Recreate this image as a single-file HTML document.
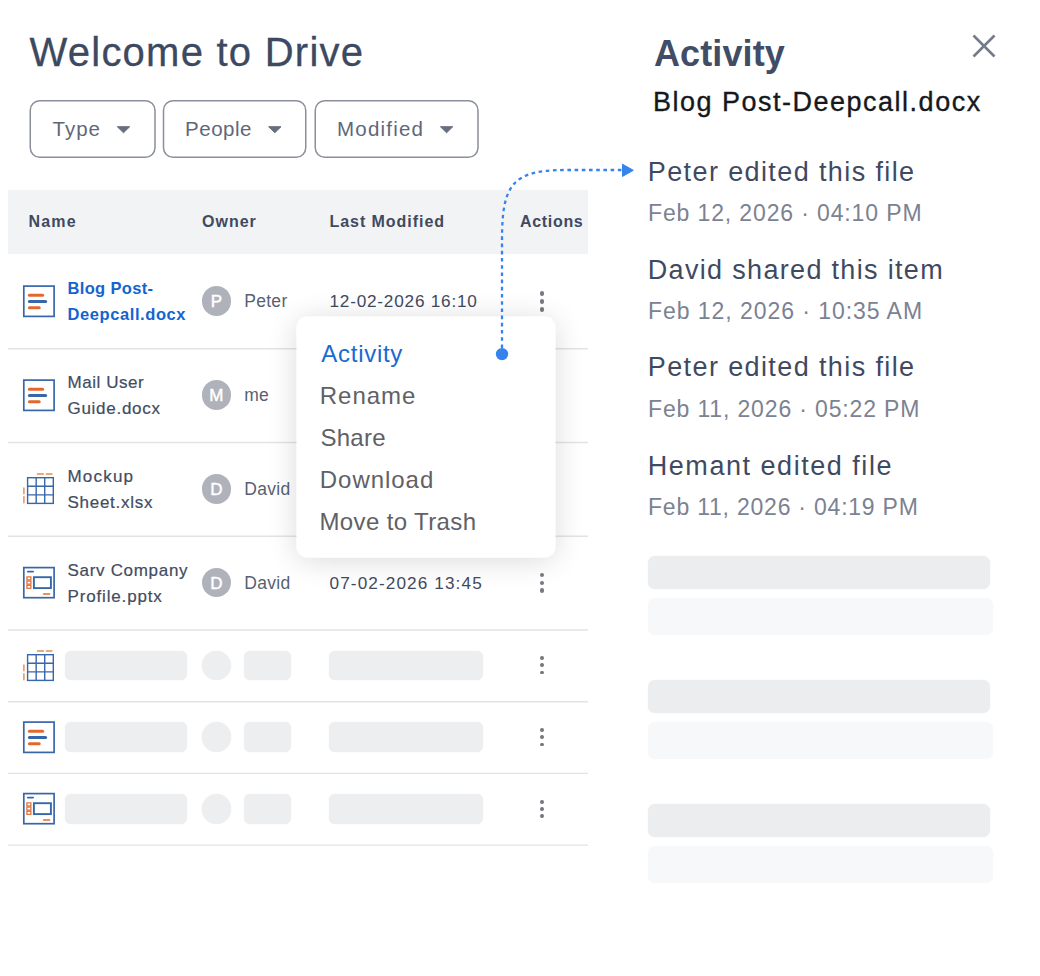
<!DOCTYPE html>
<html lang="en">
<head>
<meta charset="utf-8">
<title>Welcome to Drive</title>
<style>
*{box-sizing:border-box;margin:0;padding:0}
html,body{width:1040px;height:976px;background:#fff;overflow:hidden}
body{position:relative;font-family:"Liberation Sans",sans-serif;color:#3c4861}
.t{position:absolute;white-space:nowrap;line-height:1}
.abs{position:absolute}
h1.t{font-size:40px;font-weight:400;color:#3d4961;left:29.5px;top:31.9px;letter-spacing:1.24px;-webkit-text-stroke:.3px #3d4961}
.bt{font-size:20.5px;color:#60677a;top:118.9px}
.thead{position:absolute;left:8px;top:190px;width:580px;height:64px;background:#f1f3f5}
.th{font-size:16px;font-weight:700;color:#3f4a60;top:213.5px}
.fn{font-size:17px;color:#424c62;line-height:25.9px;left:67.5px;-webkit-text-stroke:.2px #424c62}
.fn.b{color:#1464d0;font-weight:700;font-size:16.5px;-webkit-text-stroke:0}
.av{position:absolute;left:201.5px;width:29.8px;height:29.8px;border-radius:50%;background:#afb2ba;color:#fff;font-size:17px;text-align:center;line-height:32.6px;-webkit-text-stroke:.45px #fff}
.ow{font-size:17.5px;color:#585f72;left:244.2px;letter-spacing:.3px}
.dt{font-size:17.2px;color:#3f4a60;left:329.5px;letter-spacing:.78px}
.dots{position:absolute;left:539.75px;width:5px;height:21px}
.dots b{position:absolute;left:0;width:4.5px;height:4.5px;border-radius:50%;background:#76797f}
.dots.s{left:540.1px}.dots.s b{width:3.8px;height:3.8px;background:#74777c}
.sk{position:absolute;background:#edeef0;border-radius:6px;box-shadow:0 0 1.5px #edeef0}
.mi{font-size:24px;color:#5f6166;left:320.5px}
.at{font-size:27px;color:#3f4a62;left:647.8px;letter-spacing:1.39px}
.ad{font-size:23px;color:#7b8292;left:648px;letter-spacing:.87px}
</style>
</head>
<body>

<h1 class="t">Welcome to Drive</h1>

<svg class="abs" style="left:0;top:90px" width="520" height="80" viewBox="0 90 520 80"><g fill="#fff" stroke="#8b8f9b" stroke-width="1.5"><rect x="30.25" y="100.75" width="124.75" height="56.5" rx="9.5"/><rect x="163.5" y="100.75" width="142.25" height="56.5" rx="9.5"/><rect x="315.25" y="100.75" width="162.75" height="56.5" rx="9.5"/></g><g fill="#686e7e" stroke="#686e7e" stroke-width="1" stroke-linejoin="round"><path d="M117.3 126.7H129.7L123.5 132.8Z"/><path d="M268.6 126.7H281L274.8 132.8Z"/><path d="M440.4 126.7H452.8L446.6 132.8Z"/></g></svg>
<span class="t bt" style="left:52.5px;letter-spacing:1px">Type</span>
<span class="t bt" style="left:185px;letter-spacing:.53px">People</span>
<span class="t bt" style="left:337px;letter-spacing:1.2px">Modified</span>

<div class="thead"></div>
<span class="t th" style="left:28.5px;letter-spacing:1.2px">Name</span>
<span class="t th" style="left:202px;letter-spacing:1px">Owner</span>
<span class="t th" style="left:329.5px;letter-spacing:.95px">Last Modified</span>
<span class="t th" style="left:520px;letter-spacing:.68px">Actions</span>


<svg class="abs" style="left:0;top:340px" width="600" height="520" viewBox="0 340 600 520"><path d="M8 348.7H588M8 442.5H588M8 536.25H588M8 630H588M8 701.7H588M8 773.4H588M8 845.1H588" stroke="#e1e3e6" stroke-width="1.4" fill="none"/></svg>

<!-- row 1 -->
<svg class="abs" style="left:20px;top:282px" width="38" height="38" viewBox="0 0 38 38"><rect x="3.8" y="4.1" width="30.3" height="30.3" fill="#fff" stroke="#3867a9" stroke-width="1.7"/><path d="M9.4 13.2H22.6" stroke="#e2692d" stroke-width="3" stroke-linecap="round"/><path d="M9.4 19.5H25.6" stroke="#3867a9" stroke-width="3" stroke-linecap="round"/><path d="M9.4 25.8H19.2" stroke="#e2692d" stroke-width="3" stroke-linecap="round"/></svg>
<span class="t fn b" style="top:276.1px"><span style="letter-spacing:.33px">Blog Post-</span><br><span style="letter-spacing:.59px">Deepcall.docx</span></span>
<div class="av" style="top:286.4px">P</div>
<span class="t ow" style="top:293.4px">Peter</span>
<span class="t dt" style="top:293.2px">12-02-2026 16:10</span>
<div class="dots" style="top:291.25px"><b style="top:0"></b><b style="top:8px"></b><b style="top:15.75px"></b></div>

<!-- row 2 -->
<svg class="abs" style="left:20px;top:376px" width="38" height="38" viewBox="0 0 38 38"><rect x="3.8" y="4.1" width="30.3" height="30.3" fill="#fff" stroke="#3867a9" stroke-width="1.7"/><path d="M9.4 13.2H22.6" stroke="#e2692d" stroke-width="3" stroke-linecap="round"/><path d="M9.4 19.5H25.6" stroke="#3867a9" stroke-width="3" stroke-linecap="round"/><path d="M9.4 25.8H19.2" stroke="#e2692d" stroke-width="3" stroke-linecap="round"/></svg>
<span class="t fn" style="top:370.4px"><span style="letter-spacing:.56px">Mail User</span><br><span style="letter-spacing:.72px">Guide.docx</span></span>
<div class="av" style="top:380.1px">M</div>
<span class="t ow" style="top:387.1px">me</span>

<!-- row 3 -->
<svg class="abs" style="left:20px;top:470px" width="38" height="38" viewBox="0 0 38 38"><g stroke="#3867a9" stroke-width="1.4" fill="none"><rect x="7.6" y="7.7" width="25.7" height="25.7" fill="#fff"/><path d="M16.17 7.7V33.4M24.73 7.7V33.4M7.6 16.27H33.3M7.6 24.83H33.3"/></g><path d="M17.4 4H23.4M26.4 4H32M3.9 17.9V23.7M3.9 26.8V32.8" stroke="#e78a50" stroke-width="1.4" stroke-linecap="round"/></svg>
<span class="t fn" style="top:464.1px"><span style="letter-spacing:1.19px">Mockup</span><br><span style="letter-spacing:.73px">Sheet.xlsx</span></span>
<div class="av" style="top:473.9px">D</div>
<span class="t ow" style="top:480.9px">David</span>

<!-- row 4 -->
<svg class="abs" style="left:20px;top:564px" width="38" height="38" viewBox="0 0 38 38"><rect x="3.8" y="3.6" width="30.3" height="30.1" fill="#fff" stroke="#3867a9" stroke-width="1.7"/><path d="M7.7 7.6H13.2" stroke="#3867a9" stroke-width="1.6" stroke-linecap="round"/><rect x="13.9" y="13.2" width="17" height="10.9" fill="#fff" stroke="#3867a9" stroke-width="1.9"/><g fill="none" stroke="#e2692d" stroke-width="1.2"><rect x="6.9" y="12.9" width="4" height="3"/><rect x="6.9" y="17.1" width="4" height="3"/><rect x="6.9" y="21.3" width="4" height="3"/></g><path d="M23.6 30H29.6" stroke="#e2692d" stroke-width="1.6" stroke-linecap="round"/></svg>
<span class="t fn" style="top:557.7px"><span style="letter-spacing:.69px">Sarv Company</span><br><span style="letter-spacing:.84px">Profile.pptx</span></span>
<div class="av" style="top:567.6px">D</div>
<span class="t ow" style="top:574.6px">David</span>
<span class="t dt" style="top:574.5px;letter-spacing:1.1px">07-02-2026 13:45</span>
<div class="dots" style="top:572.5px"><b style="top:0"></b><b style="top:8px"></b><b style="top:15.75px"></b></div>

<!-- skeleton rows -->
<svg class="abs" style="left:20px;top:646.6px" width="38" height="38" viewBox="0 0 38 38"><g stroke="#3867a9" stroke-width="1.4" fill="none"><rect x="7.6" y="7.7" width="25.7" height="25.7" fill="#fff"/><path d="M16.17 7.7V33.4M24.73 7.7V33.4M7.6 16.27H33.3M7.6 24.83H33.3"/></g><path d="M17.4 4H23.4M26.4 4H32M3.9 17.9V23.7M3.9 26.8V32.8" stroke="#e78a50" stroke-width="1.4" stroke-linecap="round"/></svg>
<div class="sk" style="left:65.3px;top:650.7px;width:121.5px;height:29.6px"></div>
<div class="sk" style="left:201.6px;top:650.6px;width:29.7px;height:29.7px;border-radius:50%"></div>
<div class="sk" style="left:243.7px;top:650.7px;width:47.6px;height:29.6px"></div>
<div class="sk" style="left:329.3px;top:650.7px;width:154.2px;height:29.6px"></div>
<div class="dots s" style="top:656.1px"><b style="top:0"></b><b style="top:7.3px"></b><b style="top:14.6px"></b></div>

<svg class="abs" style="left:20px;top:718px" width="38" height="38" viewBox="0 0 38 38"><rect x="3.8" y="4.1" width="30.3" height="30.3" fill="#fff" stroke="#3867a9" stroke-width="1.7"/><path d="M9.4 13.2H22.6" stroke="#e2692d" stroke-width="3" stroke-linecap="round"/><path d="M9.4 19.5H25.6" stroke="#3867a9" stroke-width="3" stroke-linecap="round"/><path d="M9.4 25.8H19.2" stroke="#e2692d" stroke-width="3" stroke-linecap="round"/></svg>
<div class="sk" style="left:65.3px;top:722.4px;width:121.5px;height:29.6px"></div>
<div class="sk" style="left:201.6px;top:722.3px;width:29.7px;height:29.7px;border-radius:50%"></div>
<div class="sk" style="left:243.7px;top:722.4px;width:47.6px;height:29.6px"></div>
<div class="sk" style="left:329.3px;top:722.4px;width:154.2px;height:29.6px"></div>
<div class="dots s" style="top:728px"><b style="top:0"></b><b style="top:7.3px"></b><b style="top:14.6px"></b></div>

<svg class="abs" style="left:20px;top:790px" width="38" height="38" viewBox="0 0 38 38"><rect x="3.8" y="3.6" width="30.3" height="30.1" fill="#fff" stroke="#3867a9" stroke-width="1.7"/><path d="M7.7 7.6H13.2" stroke="#3867a9" stroke-width="1.6" stroke-linecap="round"/><rect x="13.9" y="13.2" width="17" height="10.9" fill="#fff" stroke="#3867a9" stroke-width="1.9"/><g fill="none" stroke="#e2692d" stroke-width="1.2"><rect x="6.9" y="12.9" width="4" height="3"/><rect x="6.9" y="17.1" width="4" height="3"/><rect x="6.9" y="21.3" width="4" height="3"/></g><path d="M23.6 30H29.6" stroke="#e2692d" stroke-width="1.6" stroke-linecap="round"/></svg>
<div class="sk" style="left:65.3px;top:794.1px;width:121.5px;height:29.6px"></div>
<div class="sk" style="left:201.6px;top:794.0px;width:29.7px;height:29.7px;border-radius:50%"></div>
<div class="sk" style="left:243.7px;top:794.1px;width:47.6px;height:29.6px"></div>
<div class="sk" style="left:329.3px;top:794.1px;width:154.2px;height:29.6px"></div>
<div class="dots s" style="top:799.8px"><b style="top:0"></b><b style="top:7.3px"></b><b style="top:14.6px"></b></div>

<!-- popup menu -->
<svg class="abs" style="left:230px;top:250px" width="400" height="380" viewBox="230 250 400 380"><defs><filter id="ms" x="-30%" y="-30%" width="160%" height="160%"><feGaussianBlur in="SourceAlpha" stdDeviation="15"/><feOffset dy="3"/><feComponentTransfer><feFuncA type="linear" slope=".15"/></feComponentTransfer><feMerge><feMergeNode/><feMergeNode in="SourceGraphic"/></feMerge></filter></defs><rect x="296.6" y="316.5" width="258.7" height="241" rx="11" fill="#fff" filter="url(#ms)"/></svg>
<span class="t mi" style="top:341.8px;left:321.3px;color:#1a6ad2;letter-spacing:.72px">Activity</span>
<span class="t mi" style="top:384px;left:319.8px;letter-spacing:.95px">Rename</span>
<span class="t mi" style="top:425.8px;letter-spacing:.25px">Share</span>
<span class="t mi" style="top:467.5px;left:319.8px;letter-spacing:.96px">Download</span>
<span class="t mi" style="top:509.7px;left:319.5px;letter-spacing:.37px">Move to Trash</span>

<!-- connector -->
<svg class="abs" style="left:480px;top:150px" width="170" height="220" viewBox="480 150 170 220"><path d="M502 348V240C502 185 512 170 565 170H622" fill="none" stroke="#3584ee" stroke-width="2.3" stroke-dasharray="3.6 3.6"/><circle cx="502" cy="354.1" r="6.2" fill="#3584ee"/><path d="M622.5 164.2L633.3 170.3L622.5 176.4Z" fill="#3584ee" stroke="#3584ee" stroke-width="1" stroke-linejoin="round"/></svg>

<!-- activity panel -->
<span class="t" style="left:654px;top:35.8px;font-size:36px;font-weight:700;color:#414d67;letter-spacing:.1px">Activity</span>
<svg class="abs" style="left:970px;top:32px" width="28" height="28" viewBox="0 0 28 28"><path d="M3.5 3.5L24.5 24.5M24.5 3.5L3.5 24.5" stroke="#747c8c" stroke-width="2.6" fill="none"/></svg>
<span class="t" style="left:653px;top:89.1px;font-size:27px;color:#16181c;letter-spacing:1.5px;-webkit-text-stroke:.35px #16181c">Blog Post-Deepcall.docx</span>

<span class="t at" style="top:158.5px">Peter edited this file</span>
<span class="t ad" style="top:201.8px">Feb 12, 2026 · 04:10 PM</span>
<span class="t at" style="top:256.5px;letter-spacing:1.32px">David shared this item</span>
<span class="t ad" style="top:299.8px;letter-spacing:.95px">Feb 12, 2026 · 10:35 AM</span>
<span class="t at" style="top:354.3px">Peter edited this file</span>
<span class="t ad" style="top:397.5px;letter-spacing:.85px">Feb 11, 2026 · 05:22 PM</span>
<span class="t at" style="top:452.5px;letter-spacing:1.53px">Hemant edited file</span>
<span class="t ad" style="top:495.5px;letter-spacing:.78px">Feb 11, 2026 · 04:19 PM</span>

<div class="sk" style="left:648px;top:556px;width:341.7px;height:33.3px;background:#ecedef;border-radius:7px"></div>
<div class="sk" style="left:648px;top:598px;width:344.5px;height:37px;background:#f7f8f9;border-radius:7px;box-shadow:0 0 1.5px #f7f8f9"></div>
<div class="sk" style="left:648px;top:680px;width:341.7px;height:33.3px;background:#ecedef;border-radius:7px"></div>
<div class="sk" style="left:648px;top:722px;width:344.5px;height:37px;background:#f7f8f9;border-radius:7px;box-shadow:0 0 1.5px #f7f8f9"></div>
<div class="sk" style="left:648px;top:804px;width:341.7px;height:33.3px;background:#ecedef;border-radius:7px"></div>
<div class="sk" style="left:648px;top:846px;width:344.5px;height:37px;background:#f7f8f9;border-radius:7px;box-shadow:0 0 1.5px #f7f8f9"></div>

</body>
</html>
